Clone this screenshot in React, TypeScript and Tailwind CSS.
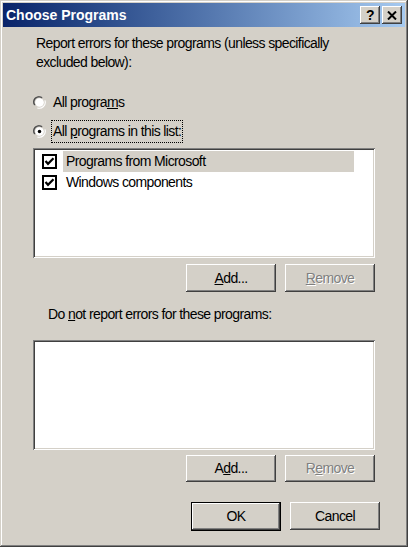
import React from "react";

const raised =
  "shadow-[inset_-1px_-1px_#404040,inset_1px_1px_#ffffff,inset_-2px_-2px_#808080,inset_2px_2px_#d4d0c8]";
const sunken =
  "shadow-[inset_1px_1px_#808080,inset_-1px_-1px_#ffffff,inset_2px_2px_#404040,inset_-2px_-2px_#d4d0c8]";

function Radio({ checked }: { checked?: boolean }) {
  return (
    <svg width="13" height="13" viewBox="0 0 12 12" className="shrink-0">
      <path d="M1 8 A5.5 5.5 0 0 1 8 1" fill="none" stroke="#808080" strokeWidth="1" />
      <path d="M2 8.5 A4.5 4.5 0 0 1 8.5 2" fill="none" stroke="#404040" strokeWidth="1" />
      <path d="M11 4 A5.5 5.5 0 0 1 4 11" fill="none" stroke="#ffffff" strokeWidth="1" />
      <circle cx="6" cy="6" r="4" fill="#ffffff" />
      {checked && <circle cx="6" cy="6" r="1.6" fill="#000000" />}
    </svg>
  );
}

function Check() {
  return (
    <svg width="15" height="15" viewBox="0 0 15 15" className="shrink-0">
      <rect x="1" y="1" width="13" height="13" fill="#ffffff" stroke="#000000" strokeWidth="2" />
      <path d="M3.5 7 L6 9.8 L11.5 4.2" fill="none" stroke="#000000" strokeWidth="2.2" />
    </svg>
  );
}

function Btn({
  children,
  disabled,
  isDefault,
  className = "",
}: {
  children: React.ReactNode;
  disabled?: boolean;
  isDefault?: boolean;
  className?: string;
}) {
  return (
    <div
      className={`flex items-center justify-center bg-[#d4d0c8] ${
        isDefault
          ? "border border-black shadow-[inset_-1px_-1px_#404040,inset_1px_1px_#ffffff,inset_-2px_-2px_#808080]"
          : raised
      } ${disabled ? "text-[#808080] [text-shadow:1px_1px_#ffffff]" : "text-black"} ${className}`}
    >
      {children}
    </div>
  );
}

export default function App() {
  return (
    <div
      className="w-[408px] h-[547px] bg-[#d4d0c8] flex flex-col text-[14px] tracking-[-0.6px] text-black shadow-[inset_-1px_-1px_#404040,inset_1px_1px_#d4d0c8,inset_-2px_-2px_#808080,inset_2px_2px_#ffffff]"
      style={{ fontFamily: '"Liberation Sans", Arial, sans-serif' }}
    >
      {/* title bar */}
      <div className="mx-[3px] mt-[3px] h-[24px] flex items-center justify-between pl-[3px] pr-[3px] bg-gradient-to-r from-[#0a246a] to-[#a6caf0]">
        <span className="text-white font-bold text-[14px] tracking-normal">Choose Programs</span>
        <div className="flex gap-[2px]">
          <div className={`w-[20px] h-[18px] bg-[#d4d0c8] ${raised} flex items-center justify-center font-bold text-[14px] leading-none`}>
            ?
          </div>
          <div className={`w-[20px] h-[18px] bg-[#d4d0c8] ${raised} flex items-center justify-center`}>
            <svg width="10" height="9" viewBox="0 0 10 9">
              <path d="M1 0.5 L9 8.5 M9 0.5 L1 8.5" stroke="#000" strokeWidth="2" />
            </svg>
          </div>
        </div>
      </div>

      <div className="flex flex-col pl-[33px] pr-[33px]">
        <p className="mt-[7px] ml-[3px] w-[310px] leading-[19px]">
          Report errors for these programs (unless specifically excluded below):
        </p>

        <div className="mt-[20px] flex items-center gap-[7px] h-[20px]">
          <Radio />
          <span>
            All progra<span className="underline">m</span>s
          </span>
        </div>
        <div className="mt-[9px] flex items-center gap-[6px] h-[20px]">
          <Radio checked />
          <span className="outline-1 outline-dotted outline-black px-[1px]">
            All <span className="underline">p</span>rograms in this list:
          </span>
        </div>

        <div className={`mt-[7px] h-[110px] bg-white ${sunken} p-[2px] flex flex-col`}>
          <div className="flex items-center h-[21px] mt-[1px]">
            <span className="w-[7px]" />
            <Check />
            <span className="ml-[6px] w-[291px] h-full flex items-center bg-[#d4d0c8] pl-[3px]">
              Programs from Microsoft
            </span>
          </div>
          <div className="flex items-center h-[21px]">
            <span className="w-[7px]" />
            <Check />
            <span className="ml-[6px] pl-[3px]">Windows components</span>
          </div>
        </div>

        <div className="mt-[6px] flex justify-end gap-[9px]">
          <Btn className="w-[90px] h-[28px]">
            <span>
              <span className="underline">A</span>dd...
            </span>
          </Btn>
          <Btn disabled className="w-[90px] h-[28px]">
            <span>
              <span className="underline">R</span>emove
            </span>
          </Btn>
        </div>

        <p className="mt-[13px] ml-[15px] leading-[19px]">
          Do <span className="underline">n</span>ot report errors for these programs:
        </p>

        <div className={`mt-[16px] h-[110px] bg-white ${sunken}`} />

        <div className="mt-[5px] flex justify-end gap-[9px]">
          <Btn className="w-[90px] h-[27px]">
            <span>
              A<span className="underline">d</span>d...
            </span>
          </Btn>
          <Btn disabled className="w-[90px] h-[27px]">
            <span>
              R<span className="underline">e</span>move
            </span>
          </Btn>
        </div>

        <div className="mt-[20px] flex justify-end gap-[9px] -mr-[5px]">
          <Btn isDefault className="w-[90px] h-[29px]">
            OK
          </Btn>
          <Btn className="w-[90px] h-[28px]">Cancel</Btn>
        </div>
      </div>
    </div>
  );
}
